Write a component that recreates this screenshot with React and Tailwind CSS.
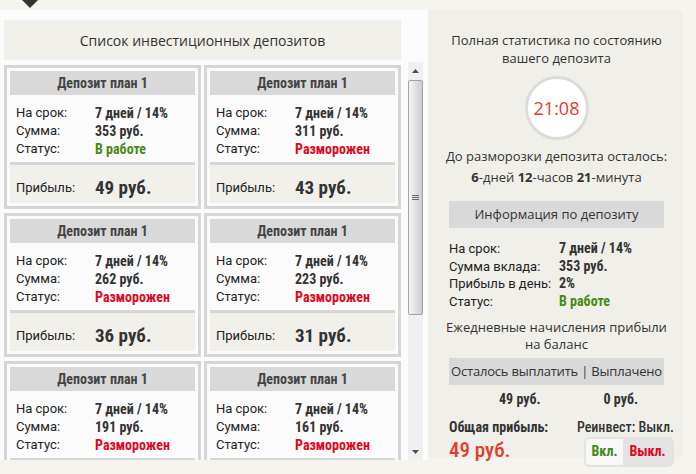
import React from 'react'

const deposits = [
  { sum: 353, status: 'work', profit: 49 },
  { sum: 311, status: 'frozen', profit: 43 },
  { sum: 262, status: 'frozen', profit: 36 },
  { sum: 223, status: 'frozen', profit: 31 },
  { sum: 191, status: 'frozen', profit: 27 },
  { sum: 161, status: 'frozen', profit: 22 },
]

const cond = "font-['Roboto_Condensed','Roboto',sans-serif] font-bold"

function Status({ status }) {
  return status === 'work'
    ? <span className="text-[#4a8a12]">В работе</span>
    : <span className="text-[#e2071c]">Разморожен</span>
}

function DepositCard({ d }) {
  return (
    <div className="border-[3px] border-[#d6d6d6] bg-[#fbfbfb] p-[3px]">
      <div className={`h-6 bg-[#d9d9d9] flex items-center justify-center text-[14px] text-[#444] ${cond}`}>
        Депозит план 1
      </div>
      <div className="grid grid-cols-[79px_1fr] px-[6px] pt-[9px] pb-[4px] text-[13px] leading-[18px]">
        <span className="font-['Roboto',sans-serif] text-[#222]">На срок:</span>
        <span className={`${cond} text-[14px] text-[#333]`}>7 дней / 14%</span>
        <span className="font-['Roboto',sans-serif] text-[#222]">Сумма:</span>
        <span className={`${cond} text-[14px] text-[#333]`}>{d.sum} руб.</span>
        <span className="font-['Roboto',sans-serif] text-[#222]">Статус:</span>
        <span className={`${cond} text-[14px]`}><Status status={d.status} /></span>
      </div>
      <div className="h-[3px] bg-[#d6d6d6]" />
      <div className="h-[38px] bg-[#f1f0eb] grid grid-cols-[79px_1fr] items-center px-[6px] pt-[8px]">
        <span className="font-['Roboto',sans-serif] text-[13px] text-[#222]">Прибыль:</span>
        <span className={`${cond} text-[19px] text-[#333]`}>{d.profit} руб.</span>
      </div>
    </div>
  )
}

// classic-looking scrollbar (the page's own one is hidden in the screenshot)
function ScrollBar() {
  return (
    <div className="w-[15px] h-full bg-[#f0f0f0] flex flex-col">
      <div className="h-[17px] flex items-center justify-center">
        <svg width="7" height="4" viewBox="0 0 7 4"><polygon points="0,4 7,4 3.5,0" fill="#505050" /></svg>
      </div>
      <div className="mt-[1px] h-[235px] rounded-[2px] border border-[#a3a3a3] bg-gradient-to-r from-[#f6f6f6] to-[#cdcdcd] flex items-center justify-center">
        <div className="flex flex-col gap-[1px]">
          <div className="w-[7px] h-[1px] bg-[#6a6a6a]" />
          <div className="w-[7px] h-[1px] bg-[#6a6a6a]" />
          <div className="w-[7px] h-[1px] bg-[#6a6a6a]" />
        </div>
      </div>
      <div className="flex-1" />
      <div className="h-[17px] flex items-center justify-center">
        <svg width="7" height="4" viewBox="0 0 7 4"><polygon points="0,0 7,0 3.5,4" fill="#505050" /></svg>
      </div>
    </div>
  )
}

function InfoRow({ label, children }) {
  return (
    <>
      <span className="font-['Roboto',sans-serif] text-[13px] text-[#222]">{label}</span>
      <span className={`${cond} text-[14px] text-[#333]`}>{children}</span>
    </>
  )
}

export default function App() {
  return (
    <div className="min-h-screen w-[696px] bg-[#f5f4ef] font-['Open_Sans',sans-serif]">
      {/* top bar */}
      <div className="h-[10px] relative">
        <svg className="absolute left-[22px] top-0" width="16" height="8" viewBox="0 0 16 8">
          <polygon points="0,0 16,0 8,8" fill="#333" />
        </svg>
      </div>

      <div className="flex items-start">
        {/* left: deposit list */}
        <div className="w-[428px] h-[450px] bg-[#fbfbfb] pt-[10px] pl-[4px]">
          <div className="w-[397px] h-10 bg-[#f1f0eb] flex items-center justify-center text-[14px] text-[#333]">
            Список инвестиционных депозитов
          </div>
          <div className="mt-[2px] w-[419px] h-[398px] flex">
            <div className="w-[404px] h-full overflow-hidden">
              <div className="grid grid-cols-[197px_197px] gap-x-[3px] gap-y-[4px] pt-[3px]">
                {deposits.map((d, i) => <DepositCard key={i} d={d} />)}
              </div>
            </div>
            <ScrollBar />
          </div>
        </div>

        {/* right: statistics */}
        <div className="w-[255px] h-[448px] bg-[#f0efea] rounded-[4px] pl-[21px] pr-[19px] pt-[21px] text-[#333] whitespace-nowrap">
          <p className="text-center text-[13px] leading-[18px] -mx-[10px]">
            Полная статистика по состоянию<br />вашего депозита
          </p>
          <div className="mx-auto mt-[9px] w-16 h-16 rounded-full bg-white border-[3px] border-[#dcdcdc] flex items-center justify-center">
            <span className="text-[18px] font-medium text-[#e53b2c]">21:08</span>
          </div>
          <p className="mt-[7px] text-center text-[13px] leading-[18px] -mx-[10px]">До разморозки депозита осталось:</p>
          <p className="mt-[3px] text-center text-[13px] leading-[18px]">
            <b>6</b>-дней <b>12</b>-часов <b>21</b>-минута
          </p>
          <div className="mt-[15px] h-[27px] bg-[#d9d9d9] flex items-center justify-center text-[13px]">
            Информация по депозиту
          </div>
          <div className="mt-[12px] grid grid-cols-[110px_1fr] leading-[17.7px]">
            <InfoRow label="На срок:">7 дней / 14%</InfoRow>
            <InfoRow label="Сумма вклада:">353 руб.</InfoRow>
            <InfoRow label="Прибыль в день:">2%</InfoRow>
            <InfoRow label="Статус:"><Status status="work" /></InfoRow>
          </div>
          <p className="mt-[8px] text-center text-[13px] leading-[17px] -mx-[10px]">
            Ежедневные начисления прибыли<br />на баланс
          </p>
          <div className="mt-[5px] h-[27px] bg-[#d9d9d9] flex items-center justify-center text-[13px] tracking-[-0.2px]">
            Осталось выплатить | Выплачено
          </div>
          <div className={`mt-[5px] grid grid-cols-2 text-[14px] leading-[18px] ${cond}`}>
            <span className="pl-[50px]">49 руб.</span>
            <span className="pl-[47px]">0 руб.</span>
          </div>
          <div className="mt-[10px] flex justify-between -mr-[10px]">
            <div>
              <div className={`${cond} text-[14px] leading-[18px]`}>Общая прибыль:</div>
              <div className="font-['Roboto_Condensed','Roboto',sans-serif] font-medium text-[21px] leading-[26px] mt-[1px] text-[#e53b2c]">49 руб.</div>
            </div>
            <div className="flex flex-col items-end">
              <div className="font-['Roboto_Condensed','Roboto',sans-serif] font-medium text-[14px] leading-[18px]">Реинвест: Выкл.</div>
              <div className={`mt-[1px] w-[90px] h-[30px] rounded-[6px] bg-[#e3e3e3] p-[2px] flex text-[14px] ${cond}`}>
                <span className="w-[37px] rounded-l-[4px] bg-[#f8f8f8] flex items-center justify-center text-[#3f8a1a]">Вкл.</span>
                <span className="flex-1 flex items-center justify-center text-[#e2071c]">Выкл.</span>
              </div>
            </div>
          </div>
        </div>
      </div>
    </div>
  )
}
